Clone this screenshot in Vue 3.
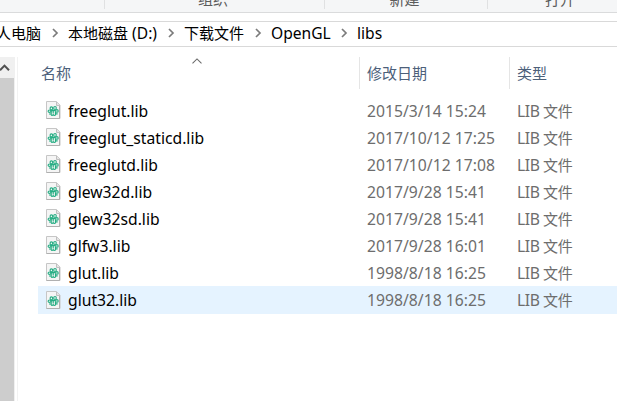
<script setup>
const groups = [
  { label: '', width: 105 },
  { label: '组织', width: 220 },
  { label: '新建', width: 163 },
  { label: '打开', width: 148 },
]
const crumbs = [
  { label: '人电脑', width: 72 },
  { label: '本地磁盘', suffix: ' (D:)', width: 116 },
  { label: '下载文件', width: 87 },
  { label: 'OpenGL', width: 86, latin: true },
  { label: 'libs', width: 40, latin: true },
]
const files = [
  { name: 'freeglut.lib', date: '2015/3/14 15:24' },
  { name: 'freeglut_staticd.lib', date: '2017/10/12 17:25' },
  { name: 'freeglutd.lib', date: '2017/10/12 17:08' },
  { name: 'glew32d.lib', date: '2017/9/28 15:41' },
  { name: 'glew32sd.lib', date: '2017/9/28 15:41' },
  { name: 'glfw3.lib', date: '2017/9/28 16:01' },
  { name: 'glut.lib', date: '1998/8/18 16:25' },
  { name: 'glut32.lib', date: '1998/8/18 16:25', selected: true },
]
</script>

<template>
  <div class="window">
    <div class="ribbon">
      <div v-for="(g, i) in groups" :key="i" class="group" :style="{ width: g.width + 'px' }">
        <span>{{ g.label }}</span>
      </div>
    </div>
    <div class="address">
      <div v-for="(c, i) in crumbs" :key="c.label" class="crumb" :class="{ latin: c.latin }" :style="{ width: c.width + 'px' }">
        <span>{{ c.label }}<span v-if="c.suffix" class="latin">{{ c.suffix }}</span></span>
        <svg v-if="i < crumbs.length - 1" class="chevron" width="7" height="10" viewBox="0 0 7 10">
          <path d="M1 1 L5 5 L1 9" fill="none" stroke="#7b7b7b" stroke-width="1.7" />
        </svg>
      </div>
    </div>
    <div class="body">
      <div class="scrollbar">
        <div class="arrow">
          <svg width="11" height="15" viewBox="0 0 11 15">
            <path d="M0 13.3 L4.5 8.6 L9 13.3" fill="none" stroke="#505050" stroke-width="2" />
          </svg>
        </div>
        <div class="thumb"></div>
      </div>
      <div class="pane">
        <div class="head">
          <div class="cell name">名称
            <svg class="sort" width="10" height="6" viewBox="0 0 10 6">
              <path d="M0.5 5.3 L5 0.9 L9.5 5.3" fill="none" stroke="#6b6b6b" stroke-width="1.1" />
            </svg>
          </div>
          <div class="cell date">修改日期</div>
          <div class="cell type">类型</div>
        </div>
        <div class="list">
          <div v-for="f in files" :key="f.name" class="row" :class="{ selected: f.selected }">
            <svg class="icon" width="15" height="19" viewBox="0 0 15 19">
              <path d="M0.5 0.5 H10.5 L14 4 V17.5 H0.5 Z" fill="#f5f5f5" stroke="#c6c6c6" />
              <path d="M0.5 17.5 H13.5 V5" fill="none" stroke="#b0b0b0" />
              <path d="M10.5 0.8 V4.5 H14" fill="#e4e4e4" stroke="#c0c0c0" />
              <g fill="none" stroke="#25ad83" stroke-width="1.15">
                <ellipse cx="5.4" cy="7.3" rx="1.3" ry="1.5" />
                <ellipse cx="9" cy="7" rx="1.3" ry="1.5" />
                <ellipse cx="3.5" cy="10.2" rx="1.4" ry="1.2" />
                <ellipse cx="10.9" cy="9.9" rx="1.3" ry="1.3" />
                <path d="M5 9.6 H9.5 M7.2 8.4 V12.5 M5.2 10 V13.7 Q5.8 15.2 7.2 13.6 Q8.7 15.4 9.5 13.7 V11 M3 13 H5.5 M9 12.8 H11.7" />
              </g>
            </svg>
            <span class="file">{{ f.name }}</span>
            <span class="when">{{ f.date }}</span>
            <span class="kind"><span class="ext">LIB</span> 文件</span>
          </div>
        </div>
      </div>
    </div>
  </div>
</template>

<style>
body { margin: 0; overflow: hidden; }
</style>

<style scoped>
.window {
  width: 617px;
  height: 401px;
  overflow: hidden;
  display: flex;
  flex-direction: column;
  background: #fff;
  font-family: "Noto Sans", "Noto Sans CJK SC", sans-serif;
  font-size: 15px;
  line-height: 20px;
  color: #000;
  white-space: nowrap;
}
.ribbon {
  display: flex;
  flex: none;
  height: 12px;
  background: #f5f6f7;
  border-bottom: 1px solid #dadbdc;
  overflow: hidden;
}
.group {
  flex: none;
  box-sizing: border-box;
  height: 9px;
  border-right: 1px solid #e0e1e2;
  text-align: center;
  color: #5c5c5c;
}
.group span { display: block; margin: -11px 3px 0 0; }
.address {
  display: flex;
  flex: none;
  align-items: center;
  box-sizing: border-box;
  height: 26px;
  margin-top: 8px;
  padding-bottom: 2px;
  margin-left: -4px;
  border-top: 1px solid #d9d9d9;
  border-bottom: 1px solid #d9d9d9;
}
.crumb {
  flex: none;
  box-sizing: border-box;
  display: flex;
  align-items: center;
  justify-content: space-between;
  padding-right: 9px;
}
.latin { font-size: 15.6px; }
.body { display: flex; flex: 1; margin-top: 10px; }
.scrollbar {
  display: flex;
  flex-direction: column;
  width: 14px;
  border-right: 1px solid #f0f0f0;
}
.arrow { height: 21px; background: #f0f0f0; }
.arrow svg { display: block; }
.thumb { flex: 1; background: #cdcdcd; }
.pane { flex: 1; margin-left: 2px; border-left: 1px solid #f2f2f2; }
.head { display: flex; height: 32px; color: #4c607a; }
.cell { box-sizing: border-box; padding: 6px 0 0 7px; border-right: 1px solid #e5e5e5; }
.name { width: 342px; padding-left: 23px; display: flex; }
.sort { margin: -5px 0 0 121px; }
.date { width: 150px; }
.type { border: 0; }
.list { display: flex; flex-direction: column; margin: 8px 0 0 20px; }
.row { display: flex; align-items: center; height: 27px; color: #6d6d6d; }
.row.selected { height: 28px; background: #e5f3ff; }
.icon { margin: 0 7px 0 8px; flex: none; }
.file { width: 299px; color: #000; font-size: 15.7px; }
.when { width: 150px; font-size: 15.7px; letter-spacing: 0.02px; }
.kind { letter-spacing: -0.4px; }
.ext { font-size: 15.7px; }
</style>
